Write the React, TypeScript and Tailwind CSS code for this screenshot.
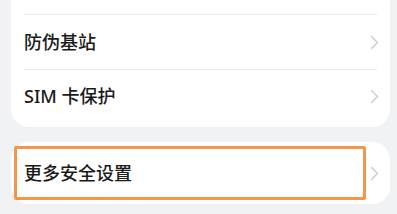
import React from 'react';

function Chevron() {
  return (
    <svg width="9" height="15" viewBox="0 0 9 15" fill="none" className="shrink-0">
      <polyline points="1.5,1.5 7.5,7.5 1.5,13.5" stroke="#c8c8c8" strokeWidth="1.3" strokeLinecap="round" strokeLinejoin="round" />
    </svg>
  );
}

function Row({ label, height, divider }: { label: string; height: string; divider?: boolean }) {
  return (
    <div className={`mx-[13px] flex items-center justify-between ${height} ${divider ? 'border-t border-[#ebebeb]' : ''}`}>
      <span className="text-[18px] font-medium text-[#1a1a1a]">{label}</span>
      <span className="-mr-[2px]">
        <Chevron />
      </span>
    </div>
  );
}

export default function App() {
  return (
    <div
      className="h-[214px] w-[397px] overflow-hidden bg-[#f1f2f4] pl-[11px] pr-[7px]"
      style={{ fontFamily: '"Noto Sans", "Noto Sans CJK SC", sans-serif' }}
    >
      {/* Settings card, top cut off */}
      <div className="rounded-b-[18px] bg-white pt-[14px]">
        <Row label="防伪基站" height="h-[55px]" divider />
        <Row label="SIM 卡保护" height="h-[58px] pb-[4px]" divider />
      </div>

      {/* More settings card */}
      <div className="relative mt-[15px] h-[62px] rounded-[18px] bg-white">
        <Row label="更多安全设置" height="h-[62px]" />
        <div className="absolute left-[3px] top-[4px] h-[54px] w-[352px] rounded-[2px] border-[3.5px] border-[#f3964c]" />
      </div>
    </div>
  );
}
